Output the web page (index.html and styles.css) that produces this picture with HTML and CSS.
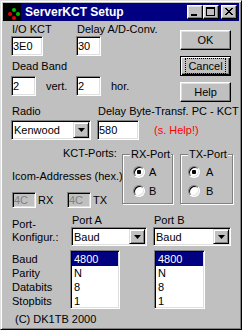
FILE: index.html
```html
<!DOCTYPE html>
<html lang="en">
<head>
    <meta charset="UTF-8">
    <title>ServerKCT Setup</title>
    <link rel="stylesheet" href="styles.css">
</head>
<body>
    <div class="window">
        <div class="titlebar">
            <svg class="app-icon" width="18" height="18" viewBox="0 0 18 18">
                <rect width="18" height="18" fill="#000"/>
                <circle cx="11" cy="7" r="2" fill="#00c000"/>
                <circle cx="7" cy="11" r="2" fill="#e00000"/>
                <circle cx="15" cy="11" r="2" fill="#00c000"/>
                <circle cx="11" cy="15" r="2" fill="#e00000"/>
            </svg>
            <span class="title">ServerKCT Setup</span>
            <div class="title-buttons">
                <button class="tbtn">
                    <svg width="14" height="12" viewBox="0 0 14 12"><rect x="3" y="8" width="6" height="2"/></svg>
                </button>
                <button class="tbtn">
                    <svg width="14" height="12" viewBox="0 0 14 12"><rect x="2" y="1" width="9" height="2"/><rect x="2.5" y="1.5" width="8" height="8" fill="none" stroke="#000"/></svg>
                </button>
                <button class="tbtn close">
                    <svg width="14" height="12" viewBox="0 0 14 12">
                        <rect x="3" y="2" width="2" height="1"/><rect x="9" y="2" width="2" height="1"/>
                        <rect x="4" y="3" width="2" height="1"/><rect x="8" y="3" width="2" height="1"/>
                        <rect x="5" y="4" width="4" height="1"/>
                        <rect x="6" y="5" width="2" height="1"/>
                        <rect x="5" y="6" width="4" height="1"/>
                        <rect x="4" y="7" width="2" height="1"/><rect x="8" y="7" width="2" height="1"/>
                        <rect x="3" y="8" width="2" height="1"/><rect x="9" y="8" width="2" height="1"/>
                    </svg>
                </button>
            </div>
        </div>

        <div class="dialog">
            <div class="top">
                <div class="top-fields">
                    <div class="row">
                        <div class="col-a">
                            <label class="cap">I/O KCT</label>
                            <input class="edit w32" type="text" value="3E0">
                        </div>
                        <div>
                            <label class="cap">Delay A/D-Conv.</label>
                            <input class="edit w25" type="text" value="30">
                        </div>
                    </div>
                    <label class="cap dead-label">Dead Band</label>
                    <div class="row dead-row">
                        <div class="col-a inline">
                            <input class="edit w25" type="text" value="2">
                            <span class="unit">vert.</span>
                        </div>
                        <div class="inline">
                            <input class="edit w25" type="text" value="2">
                            <span class="unit">hor.</span>
                        </div>
                    </div>
                </div>
                <div class="buttons">
                    <button class="btn">OK</button>
                    <button class="btn default"><span class="focus">Cancel</span></button>
                    <button class="btn">Help</button>
                </div>
            </div>

            <div class="radio-grid">
                <label class="cap">Radio</label>
                <label class="cap">Delay Byte-Transf. PC - KCT</label>
                <div class="combo w80">
                    <span class="value">Kenwood</span>
                    <span class="drop"><svg width="7" height="4" viewBox="0 0 7 4"><path d="M0 0h7L3.5 4z"/></svg></span>
                </div>
                <div class="inline">
                    <input class="edit w42" type="text" value="580">
                    <span class="hint">(s. Help!)</span>
                </div>
            </div>

            <div class="kct">
                <div class="kct-left">
                    <div class="kct-label">KCT-Ports:</div>
                    <div class="icom-label">Icom-Addresses (hex.)</div>
                    <div class="icom-row">
                        <div class="addr">
                            <input class="edit small" type="text" value="4C" disabled>
                            <span>RX</span>
                        </div>
                        <div class="addr">
                            <input class="edit small" type="text" value="4C" disabled>
                            <span>TX</span>
                        </div>
                    </div>
                </div>
                <div class="ports">
                    <fieldset class="group rx">
                        <legend>RX-Port</legend>
                        <div class="opt"><span class="radio checked"></span>A</div>
                        <div class="opt"><span class="radio"></span>B</div>
                    </fieldset>
                    <fieldset class="group tx">
                        <legend>TX-Port</legend>
                        <div class="opt"><span class="radio checked"></span>A</div>
                        <div class="opt"><span class="radio"></span>B</div>
                    </fieldset>
                </div>
            </div>

            <div class="port-grid">
                <div class="port-caption">
                    <div>Port-</div>
                    <div>Konfigur.:</div>
                </div>
                <div>
                    <div class="cap">Port A</div>
                    <div class="combo small-combo w76">
                        <span class="value">Baud</span>
                        <span class="drop"><svg width="7" height="4" viewBox="0 0 7 4"><path d="M0 0h7L3.5 4z"/></svg></span>
                    </div>
                </div>
                <div>
                    <div class="cap">Port B</div>
                    <div class="combo small-combo w78">
                        <span class="value">Baud</span>
                        <span class="drop"><svg width="7" height="4" viewBox="0 0 7 4"><path d="M0 0h7L3.5 4z"/></svg></span>
                    </div>
                </div>
            </div>

            <div class="lists">
                <ul class="param-names">
                    <li>Baud</li>
                    <li>Parity</li>
                    <li>Databits</li>
                    <li>Stopbits</li>
                </ul>
                <ul class="listbox port-a">
                    <li class="selected">4800</li>
                    <li>N</li>
                    <li>8</li>
                    <li>1</li>
                </ul>
                <ul class="listbox port-b">
                    <li class="selected">4800</li>
                    <li>N</li>
                    <li>8</li>
                    <li>1</li>
                </ul>
            </div>

            <div class="footer">(C) DK1TB 2000</div>
        </div>
    </div>
</body>
</html>
```

FILE: styles.css
```css
body {
    margin: 0;
    font-family: "Liberation Sans", Arial, sans-serif;
    font-size: 11px;
    color: #000;
    background-color: #c0c0c0;
    white-space: nowrap;
}

.window {
    width: 242px;
    height: 330px;
    box-sizing: border-box;
    background-color: #c0c0c0;
    border: 1px solid;
    border-color: #dfdfdf #000 #000 #dfdfdf;
    box-shadow: inset 1px 1px #fff, inset -1px -1px #808080;
    padding: 2px;
    display: flex;
    flex-direction: column;
}

/* title bar */
.titlebar {
    height: 18px;
    flex: none;
    background-color: #000080;
    color: #fff;
    display: flex;
    align-items: center;
    font-weight: bold;
    font-size: 12px;
}

.app-icon {
    flex: none;
    display: block;
}

.title {
    margin-left: 4px;
}

.title-buttons {
    margin-left: auto;
    margin-right: 2px;
    display: flex;
}

.tbtn {
    width: 16px;
    height: 14px;
    padding: 0;
    box-sizing: border-box;
    background-color: #c0c0c0;
    border: 1px solid;
    border-color: #fff #000 #000 #fff;
    box-shadow: inset -1px -1px #808080, inset 1px 1px #dfdfdf;
}

.tbtn svg {
    display: block;
    shape-rendering: crispEdges;
}

.tbtn.close {
    margin-left: 2px;
}

/* dialog body */
.dialog {
    flex: 1;
    min-height: 0;
}

.top {
    display: flex;
    align-items: flex-start;
}

.top-fields {
    padding-left: 8px;
    padding-top: 2px;
}

.row {
    display: flex;
}

.col-a {
    width: 65px;
}

.cap {
    display: block;
    line-height: 13px;
    padding-left: 1px;
}

.inline {
    display: flex;
    align-items: center;
}

.edit {
    display: block;
    height: 20px;
    box-sizing: border-box;
    margin: 0;
    padding: 0 1px;
    border: 1px solid;
    border-color: #808080 #fff #fff #808080;
    box-shadow: inset 1px 1px #000, inset -1px -1px #dfdfdf;
    background-color: #fff;
    font: inherit;
    color: #000;
    outline: none;
}

.w25 { width: 25px; }
.w32 { width: 32px; }
.w42 { width: 42px; }
.w76 { width: 76px; }
.w78 { width: 78px; }
.w80 { width: 80px; }

.dead-label {
    margin-top: 4px;
}

.dead-row {
    margin-top: 3px;
}

.unit {
    margin-left: 10px;
}

.buttons {
    margin-left: auto;
    margin-right: 8px;
    padding-top: 9px;
    display: flex;
    flex-direction: column;
    gap: 6px;
}

.btn {
    width: 51px;
    height: 20px;
    padding: 0;
    font: inherit;
    color: #000;
    background-color: #c0c0c0;
    border: 1px solid;
    border-color: #fff #000 #000 #fff;
    box-shadow: inset -1px -1px #808080, inset 1px 1px #dfdfdf;
}

.btn.default {
    border-color: #000;
    box-shadow: inset 1px 1px #fff, inset -1px -1px #000, inset -2px -2px #808080;
}

.focus {
    outline: 1px dotted #000;
    outline-offset: 1px;
    padding: 0 1px;
}

/* radio + delay */
.radio-grid {
    margin-top: 3px;
    padding-left: 8px;
    display: grid;
    grid-template-columns: 86px auto;
    row-gap: 2px;
}

.combo {
    height: 20px;
    box-sizing: border-box;
    border: 1px solid;
    border-color: #808080 #fff #fff #808080;
    box-shadow: inset 1px 1px #000, inset -1px -1px #dfdfdf;
    background-color: #fff;
    padding: 1px;
    display: flex;
}

.combo.small-combo {
    height: 19px;
}

.combo .value {
    flex: 1;
    display: flex;
    align-items: center;
    padding-left: 1px;
}

.drop {
    width: 16px;
    box-sizing: border-box;
    background-color: #c0c0c0;
    border: 1px solid;
    border-color: #dfdfdf #000 #000 #dfdfdf;
    box-shadow: inset 1px 1px #fff, inset -1px -1px #808080;
    display: flex;
    align-items: center;
    justify-content: center;
}

.drop svg {
    display: block;
}

.hint {
    margin-left: 15px;
    color: #ff0000;
}

/* KCT ports */
.kct {
    margin-top: 7px;
    display: flex;
    align-items: flex-start;
}

.kct-left {
    width: 119px;
    flex: none;
}

.kct-label {
    line-height: 13px;
    padding-left: 60px;
}

.icom-label {
    line-height: 13px;
    margin-top: 10px;
    padding-left: 9px;
}

.icom-row {
    margin-top: 9px;
    padding-left: 9px;
    display: flex;
}

.addr {
    width: 60px;
    display: flex;
    align-items: center;
}

.addr span {
    margin-left: 2px;
}

.edit.small {
    width: 24px;
    height: 16px;
    background-color: #c0c0c0;
    color: #808080;
}

.ports {
    margin-top: 1px;
    display: flex;
    gap: 7px;
}

.group {
    margin: 0;
    height: 56px;
    box-sizing: border-box;
    min-width: 0;
    padding: 5px 0 0 10px;
    border: 1px solid #808080;
    box-shadow: inset 1px 1px #fff, 1px 1px #fff;
}

.group.rx {
    width: 51px;
}

.group.tx {
    width: 53px;
    padding-left: 7px;
}

.group legend {
    line-height: 13px;
    padding: 0 1px;
    margin-left: -3px;
    background-color: #c0c0c0;
}

.group.tx legend {
    margin-left: 0;
}

.opt {
    display: flex;
    align-items: center;
    height: 12px;
}

.opt + .opt {
    margin-top: 7px;
}

.radio {
    width: 12px;
    height: 12px;
    box-sizing: border-box;
    border-radius: 50%;
    border: 1px solid;
    border-color: #808080 #fff #fff #808080;
    box-shadow: inset 1px 1px #000, inset -1px -1px #dfdfdf;
    background-color: #fff;
    margin-right: 4px;
}

.tx .radio {
    margin-right: 6px;
}

.radio.checked {
    background: radial-gradient(circle, #000 2px, #fff 2.5px);
}

/* port configuration */
.port-grid {
    margin-top: 6px;
    padding-left: 9px;
    display: grid;
    grid-template-columns: 59px 82px auto;
}

.port-caption {
    padding-top: 4px;
    line-height: 13px;
}

.lists {
    margin-top: 4px;
    display: flex;
    align-items: flex-start;
}

.param-names {
    list-style: none;
    margin: 2px 0 0;
    padding: 0 0 0 9px;
    width: 58px;
    flex: none;
    line-height: 14px;
}

.listbox {
    list-style: none;
    margin: 0;
    padding: 1px;
    height: 59px;
    box-sizing: border-box;
    border: 1px solid;
    border-color: #808080 #fff #fff #808080;
    box-shadow: inset 1px 1px #000, inset -1px -1px #dfdfdf;
    background-color: #fff;
    line-height: 14px;
    flex: none;
}

.listbox li {
    padding-left: 2px;
}

.listbox li.selected {
    background-color: #000080;
    color: #fff;
}

.port-a {
    width: 50px;
}

.port-b {
    width: 51px;
    margin-left: 34px;
}

.footer {
    margin-top: 3px;
    padding-left: 12px;
    line-height: 14px;
}
```
